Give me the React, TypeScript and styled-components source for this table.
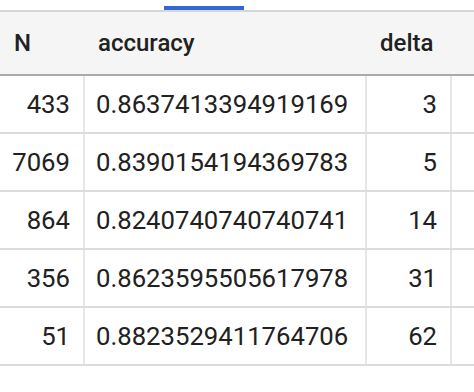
import styled, { createGlobalStyle } from "styled-components";

const GlobalStyle = createGlobalStyle`
	html, body {
		margin: 0;
		padding: 0;
		background: #ffffff;
	}
	body {
		font-family: Roboto, "Liberation Sans", sans-serif;
		color: #212121;
	}
`;

interface Fila {
	n: number;
	accuracy: string;
	delta: number;
}

const filas: Fila[] = [
	{ n: 433, accuracy: "0.8637413394919169", delta: 3 },
	{ n: 7069, accuracy: "0.8390154194369783", delta: 5 },
	{ n: 864, accuracy: "0.8240740740740741", delta: 14 },
	{ n: 356, accuracy: "0.8623595505617978", delta: 31 },
	{ n: 51, accuracy: "0.8823529411764706", delta: 62 },
];

const Pagina = styled.div`
	width: 474px;
	height: 392px;
	overflow: hidden;
`;

const TabBar = styled.div`
	height: 10px;
	border-bottom: 2px solid #d6d6d6;
	display: flex;
	align-items: flex-end;
	padding-left: 164px;
`;

const TabIndicador = styled.div`
	width: 80px;
	height: 4px;
	background: #3367d6;
`;

const Tabla = styled.table`
	border-collapse: collapse;
	table-layout: fixed;
	width: 500px;

	th {
		height: 62px;
		padding: 0 14px;
		background: #f5f5f5;
		border-bottom: 2px solid #ababab;
		font-size: 24px;
		font-weight: 500;
		color: #212121;
		text-align: left;
	}

	td {
		height: 56px;
		padding: 0 13px 0 11px;
		border-bottom: 2px solid #dcdcdc;
		border-right: 2px solid #e6e6e6;
		font-size: 25.7px;
		color: #212121;
		white-space: nowrap;
	}
`;

const Celda = styled.td<{ $derecha?: boolean }>`
	text-align: ${props => (props.$derecha ? "right" : "left")};
`;

export default function App() {
	return (
		<Pagina>
			<GlobalStyle />
			<TabBar>
				<TabIndicador />
			</TabBar>
			<Tabla>
				<colgroup>
					<col style={{ width: 84 }} />
					<col style={{ width: 282 }} />
					<col style={{ width: 85 }} />
					<col style={{ width: 49 }} />
				</colgroup>
				<thead>
					<tr>
						<th>N</th>
						<th>accuracy</th>
						<th>delta</th>
						<th></th>
					</tr>
				</thead>
				<tbody>
					{filas.map((fila) => (
						<tr key={fila.n}>
							<Celda $derecha>{fila.n}</Celda>
							<Celda>{fila.accuracy}</Celda>
							<Celda $derecha>{fila.delta}</Celda>
							<Celda></Celda>
						</tr>
					))}
				</tbody>
			</Tabla>
		</Pagina>
	);
}
